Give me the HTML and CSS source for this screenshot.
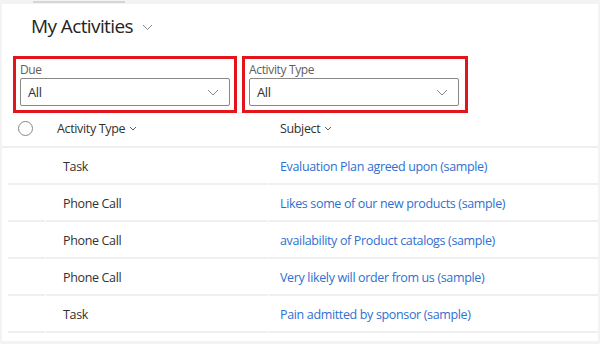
FILE: index.html
```html
<!DOCTYPE html>
<html lang="en">
<head>
    <meta charset="UTF-8">
    <title>My Activities</title>
    <link rel="stylesheet" href="styles.css">
</head>
<body>
    <div class="frame">
        <div class="top-strip"><span class="top-tab"></span></div>

        <div class="title">
            <h1>My Activities</h1>
            <svg class="title-chevron" width="11" height="7" viewBox="0 0 11 7"><path d="M1 1l4.5 4.5L10 1" fill="none" stroke="#8a8886" stroke-width="1"/></svg>
        </div>

        <div class="filters">
            <div class="filter-box">
                <label class="filter-label">Due</label>
                <div class="select">
                    <span>All</span>
                    <svg width="12" height="7" viewBox="0 0 12 7"><path d="M1 1l5 5 5-5" fill="none" stroke="#8a8886" stroke-width="1"/></svg>
                </div>
            </div>
            <div class="filter-box wide">
                <label class="filter-label">Activity Type</label>
                <div class="select">
                    <span>All</span>
                    <svg width="12" height="7" viewBox="0 0 12 7"><path d="M1 1l5 5 5-5" fill="none" stroke="#8a8886" stroke-width="1"/></svg>
                </div>
            </div>
        </div>

        <div class="grid">
            <div class="grid-head">
                <div class="cell check"><span class="circle"></span></div>
                <div class="cell type">Activity Type<svg width="8" height="5" viewBox="0 0 8 5"><path d="M1 1l3 3 3-3" fill="none" stroke="#605e5c" stroke-width="1"/></svg></div>
                <div class="cell subject">Subject<svg width="8" height="5" viewBox="0 0 8 5"><path d="M1 1l3 3 3-3" fill="none" stroke="#605e5c" stroke-width="1"/></svg></div>
            </div>
            <div class="row">
                <div class="cell check"></div>
                <div class="cell type">Task</div>
                <div class="cell subject"><a href="#">Evaluation Plan agreed upon (sample)</a></div>
            </div>
            <div class="row">
                <div class="cell check"></div>
                <div class="cell type">Phone Call</div>
                <div class="cell subject"><a href="#">Likes some of our new products (sample)</a></div>
            </div>
            <div class="row">
                <div class="cell check"></div>
                <div class="cell type">Phone Call</div>
                <div class="cell subject"><a href="#">availability of Product catalogs (sample)</a></div>
            </div>
            <div class="row">
                <div class="cell check"></div>
                <div class="cell type">Phone Call</div>
                <div class="cell subject"><a href="#">Very likely will order from us (sample)</a></div>
            </div>
            <div class="row">
                <div class="cell check"></div>
                <div class="cell type">Task</div>
                <div class="cell subject"><a href="#">Pain admitted by sponsor (sample)</a></div>
            </div>
        </div>
    </div>
</body>
</html>
```

FILE: styles.css
```css
html, body {
    margin: 0;
    padding: 0;
}

body {
    width: 600px;
    height: 344px;
    overflow: hidden;
    background-color: #ffffff;
    font-family: "Open Sans", "Noto Sans", sans-serif;
    color: #323130;
    letter-spacing: -0.35px;
}

.frame {
    height: 344px;
    box-sizing: border-box;
    border-left: 2px solid #f3f3f3;
    border-right: 2px solid #f3f3f3;
    border-bottom: 3px solid #f3f3f3;
}

.top-strip {
    height: 4px;
    background-color: #f3f3f3;
    position: relative;
}

    .top-tab {
        position: absolute;
        left: 31px;
        top: 1px;
        width: 92px;
        height: 2px;
        background-color: #d6d6d6;
    }

.title {
    display: flex;
    align-items: center;
    height: 44px;
    padding-left: 29px;
    box-sizing: border-box;
}

    .title h1 {
        margin: 0;
        font-size: 19px;
        font-weight: 500;
        color: #252423;
        letter-spacing: -0.6px;
    }

.title-chevron {
    margin-left: 9px;
    margin-top: 2px;
}

.filters {
    display: flex;
    gap: 5px;
    padding: 8px 0 0 11px;
}

.filter-box {
    width: 224px;
    height: 57px;
    box-sizing: border-box;
    border: 3px solid #e3141c;
    padding: 0 4px 4px 4px;
    display: flex;
    flex-direction: column;
}

    .filter-box.wide {
        width: 226px;
        padding-right: 6px;
    }

.filter-label {
    height: 19px;
    line-height: 22px;
    font-size: 12px;
    color: #605e5c;
}

.select {
    height: 28px;
    box-sizing: border-box;
    border: 1px solid #8a8886;
    border-radius: 2px;
    display: flex;
    align-items: center;
    justify-content: space-between;
    padding: 0 10px 0 7px;
    font-size: 13px;
    color: #323130;
}

.grid-head {
    display: flex;
    height: 35px;
    padding-bottom: 2px;
    box-sizing: border-box;
    border-bottom: 2px solid #efefef;
    font-size: 12.5px;
    font-weight: 500;
    align-items: center;
}

    .grid-head .cell svg {
        margin-left: 4px;
        vertical-align: 2px;
    }

.row {
    display: flex;
    height: 37px;
    font-size: 12.5px;
    align-items: stretch;
}

    .row .cell {
        border-bottom: 2px solid #efefef;
        display: flex;
        align-items: center;
        box-sizing: border-box;
        padding-top: 2px;
    }

.cell.check {
    width: 44px;
    flex-shrink: 0;
    display: flex;
    align-items: center;
    padding-left: 16px;
    box-sizing: border-box;
}

.cell.type {
    width: 222px;
    flex-shrink: 0;
    padding-left: 11px;
    box-sizing: border-box;
}

.cell.subject {
    flex: 1;
    padding-left: 12px;
}

.row .cell.check {
    margin-left: 6px;
    width: 37px;
    margin-right: 1px;
}

.row .cell.type {
    width: 222px;
    margin-right: 1px;
    padding-left: 17px;
}

.row .cell.subject {
    padding-left: 11px;
}

.circle {
    width: 15px;
    height: 15px;
    box-sizing: border-box;
    border: 1px solid #8a8886;
    border-radius: 50%;
}

a {
    color: #2f6fd1;
    text-decoration: none;
}
```
